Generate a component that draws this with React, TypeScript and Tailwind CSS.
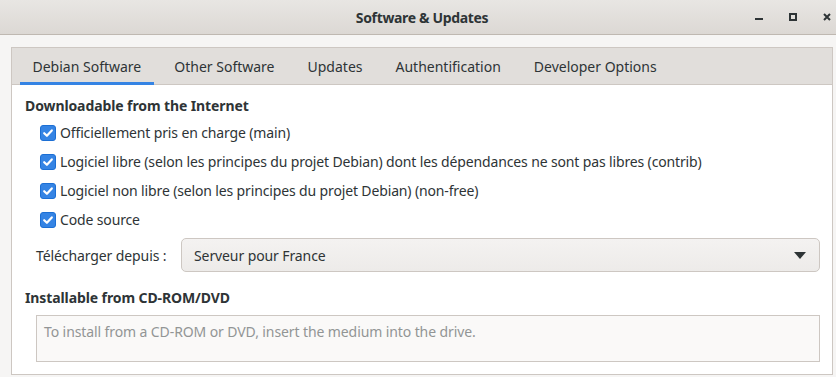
import { useState } from "react";

const tabs = ["Debian Software", "Other Software", "Updates", "Authentification", "Developer Options"];

const sources = [
    "Officiellement pris en charge (main)",
    "Logiciel libre (selon les principes du projet Debian) dont les dépendances ne sont pas libres (contrib)",
    "Logiciel non libre (selon les principes du projet Debian) (non-free)",
    "Code source",
];

function CheckBox({ checked }: { checked: boolean }) {
    return (
        <span className="w-4 h-4 rounded-[3px] bg-[#3584e4] border border-[#1c6fd4] flex items-center justify-center shrink-0">
            {checked && (
                <svg width="12" height="12" viewBox="0 0 12 12">
                    <path d="M2.2 6.2 L4.9 8.8 L9.8 3.4" fill="none" stroke="white" strokeWidth="2.2" strokeLinecap="round" strokeLinejoin="round" />
                </svg>
            )}
        </span>
    );
}

export default function App() {
    const [active] = useState(0);

    return (
        <div className="w-[836px] h-[377px] overflow-hidden bg-[#f6f5f4] text-[#2e3436] text-[14px] font-['Noto_Sans',sans-serif] flex flex-col">
            {/* Title bar */}
            <div className="h-[35px] shrink-0 bg-gradient-to-b from-[#e8e6e3] to-[#dcd8d4] border-b border-[#bfb8b1] relative flex items-center justify-center">
                <span className="font-bold text-[14px] tracking-[-0.35px] pl-[8px] text-[#2e3436]">Software &amp; Updates</span>
                {/* window controls */}
                <span className="absolute left-[755px] top-[18px] w-[8px] h-[2px] bg-[#2e3436]" />
                <span className="absolute left-[789px] top-[13px] w-[8px] h-[8px] border-2 border-[#2e3436]" />
                <svg className="absolute left-[823px] top-[13px]" width="8" height="8" viewBox="0 0 8 8">
                    <path d="M1 1 L7 7 M7 1 L1 7" stroke="#2e3436" strokeWidth="2" />
                </svg>
            </div>

            {/* Body */}
            <div className="flex-1 pt-[12px] pl-[11px] pr-[3px]">
                <div className="border border-[#cdc7c2] bg-white">
                    {/* Tabs */}
                    <div className="h-[37px] bg-[#e1dedb] border-b border-[#cdc7c2] flex items-stretch pl-[8px] gap-[8px]">
                        {tabs.map((t, i) => (
                            <div
                                key={t}
                                className={
                                    i === active
                                        ? "px-[12.5px] flex items-center border-b-[3px] border-[#3584e4] -mb-px pt-[2px] text-[#2e3436]"
                                        : "px-[12.5px] flex items-center border-b-[3px] border-transparent -mb-px pt-[2px] text-[#2e3436]"
                                }
                            >
                                {t}
                            </div>
                        ))}
                    </div>

                    {/* Content */}
                    <div className="pt-[11px] pl-[13px] pr-[12px] pb-[12px]">
                        <div className="h-[20px] leading-[20px] font-bold tracking-[-0.1px]">Downloadable from the Internet</div>

                        <div className="mt-[2px] pl-[15px]">
                            {sources.map((s) => (
                                <div key={s} className="h-[29px] flex items-center gap-[4px]">
                                    <CheckBox checked />
                                    <span className="whitespace-nowrap tracking-[-0.14px]">{s}</span>
                                </div>
                            ))}
                        </div>

                        <div className="mt-[4px] pl-[11px] flex items-center">
                            <span className="w-[145px] shrink-0 whitespace-nowrap tracking-[-0.1px]">Télécharger depuis :</span>
                            <div className="flex-1 h-[34px] rounded-[5px] border border-[#cdc7c2] bg-gradient-to-b from-[#f4f2f1] to-[#edebe9] flex items-center justify-between pl-[12px] pr-[13px]">
                                <span className="tracking-[-0.1px]">Serveur pour France</span>
                                <svg width="12" height="7" viewBox="0 0 12 7">
                                    <path d="M0 0 H12 L6 7 Z" fill="#2e3436" />
                                </svg>
                            </div>
                        </div>

                        <div className="mt-[16px] h-[20px] leading-[20px] font-bold tracking-[-0.1px]">Installable from CD-ROM/DVD</div>

                        <div className="mt-[7px] ml-[11px] h-[47px] border border-[#cdc7c2] bg-[#faf9f8] pl-[7px] pt-[5px] text-[#929595] tracking-[-0.1px]">
                            To install from a CD-ROM or DVD, insert the medium into the drive.
                        </div>
                    </div>
                </div>
            </div>
        </div>
    );
}
